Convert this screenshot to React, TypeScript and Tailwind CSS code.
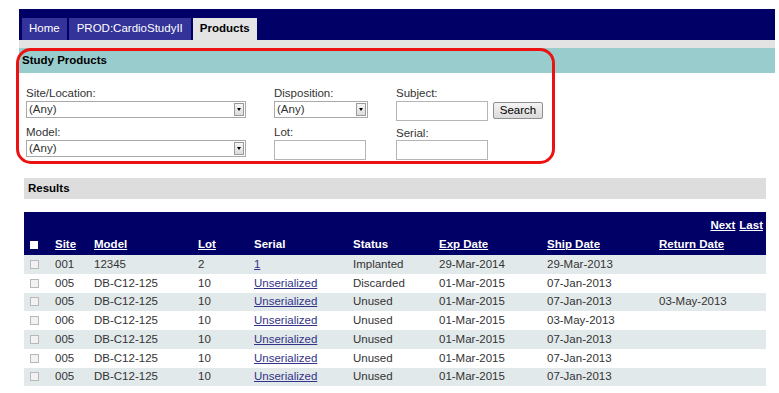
import React from "react";

const rows = [
  { site: "001", model: "12345", lot: "2", serial: "1", status: "Implanted", exp: "29-Mar-2014", ship: "29-Mar-2013", ret: "" },
  { site: "005", model: "DB-C12-125", lot: "10", serial: "Unserialized", status: "Discarded", exp: "01-Mar-2015", ship: "07-Jan-2013", ret: "" },
  { site: "005", model: "DB-C12-125", lot: "10", serial: "Unserialized", status: "Unused", exp: "01-Mar-2015", ship: "07-Jan-2013", ret: "03-May-2013" },
  { site: "006", model: "DB-C12-125", lot: "10", serial: "Unserialized", status: "Unused", exp: "01-Mar-2015", ship: "03-May-2013", ret: "" },
  { site: "005", model: "DB-C12-125", lot: "10", serial: "Unserialized", status: "Unused", exp: "01-Mar-2015", ship: "07-Jan-2013", ret: "" },
  { site: "005", model: "DB-C12-125", lot: "10", serial: "Unserialized", status: "Unused", exp: "01-Mar-2015", ship: "07-Jan-2013", ret: "" },
  { site: "005", model: "DB-C12-125", lot: "10", serial: "Unserialized", status: "Unused", exp: "01-Mar-2015", ship: "07-Jan-2013", ret: "" },
];

const cols = "grid grid-cols-[31px_39px_104px_56px_99px_86px_108px_112px_1fr] items-center";

function Select({ w }: { w: string }) {
  return (
    <div className={`${w} h-[17px] border border-[#a9a9a9] bg-white flex items-center justify-between pl-[2px] pr-[1px]`}>
      <span className="leading-none">(Any)</span>
      <div className="w-[10px] h-[13px] border border-[#9a9a9a] bg-gradient-to-b from-[#f6f6f6] to-[#dcdcdc] flex items-center justify-center">
        <div className="w-0 h-0 border-l-[2.5px] border-r-[2.5px] border-t-[3px] border-l-transparent border-r-transparent border-t-black" />
      </div>
    </div>
  );
}

function TextBox() {
  return <div className="w-[92px] h-[20px] border border-[#b5b5b5] bg-white" />;
}

export default function App() {
  return (
    <div className="relative w-[779px] h-[393px] bg-white text-[11.5px] text-[#333] font-['Liberation_Sans',Arial,sans-serif] overflow-hidden">
      {/* header */}
      <div className="pt-[9px] pl-[19px] pr-[4px]">
        <div className="h-[31px] bg-[#000066] flex items-end gap-[2px] pl-[3px]">
          <div className="h-[22px] px-[7px] bg-[#333399] text-white flex items-center">Home</div>
          <div className="h-[22px] px-[8px] bg-[#333399] text-white flex items-center">PROD:CardioStudyII</div>
          <div className="h-[22px] px-[7px] bg-[#e4e4e4] text-black font-bold flex items-center">Products</div>
        </div>
        <div className="h-[8px] bg-[#e3e3e3]" />
        <div className="h-[25px] bg-[#99cccc] flex items-center pl-[3px] font-bold text-black">Study Products</div>
      </div>

      {/* filter form */}
      <div className="flex pl-[26px] pt-[13px]">
        <div className="w-[220px] flex flex-col">
          <div className="h-[14px] leading-[14px]">Site/Location:</div>
          <div className="mt-[1px]"><Select w="w-[220px]" /></div>
          <div className="h-[14px] leading-[14px] mt-[7px]">Model:</div>
          <div className="mt-[1px]"><Select w="w-[220px]" /></div>
        </div>
        <div className="ml-[28px] w-[94px] flex flex-col">
          <div className="h-[14px] leading-[14px]">Disposition:</div>
          <div className="mt-[1px]"><Select w="w-[94px]" /></div>
          <div className="h-[14px] leading-[14px] mt-[7px]">Lot:</div>
          <div className="mt-[1px]"><TextBox /></div>
        </div>
        <div className="ml-[28px] w-[92px] flex flex-col">
          <div className="h-[14px] leading-[14px]">Subject:</div>
          <div className="mt-[1px]"><TextBox /></div>
          <div className="h-[14px] leading-[14px] mt-[5px]">Serial:</div>
          <div className="mt-[0px]"><TextBox /></div>
        </div>
        <div className="ml-[5px] mt-[16px]">
          <div className="h-[17px] w-[50px] border border-[#8f8f8f] rounded-[2px] bg-gradient-to-b from-[#f4f4f4] to-[#dadada] text-black flex items-center justify-center">Search</div>
        </div>
      </div>

      {/* results */}
      <div className="mx-[24px] mt-[18px] w-[742px]">
        <div className="h-[21px] bg-[#dddddd] flex items-center pl-[4px] font-bold text-black">Results</div>
        <div className="mt-[13px] bg-[#000066] h-[43px] flex flex-col">
          <div className="h-[22px] flex items-end justify-end pr-[3px] gap-[4px] text-white font-bold">
            <span className="underline">Next</span>
            <span className="underline">Last</span>
          </div>
          <div className={`${cols} h-[21px] text-white font-bold`}>
            <div className="pl-[6px]"><div className="w-[8px] h-[8px] bg-white" /></div>
            <span className="underline">Site</span>
            <span className="underline">Model</span>
            <span className="underline">Lot</span>
            <span>Serial</span>
            <span>Status</span>
            <span className="underline">Exp Date</span>
            <span className="underline">Ship Date</span>
            <span className="underline">Return Date</span>
          </div>
        </div>
        {rows.map((r, i) => (
          <div key={i} className={`${cols} h-[18.75px] ${i % 2 === 0 ? "bg-[#e2e9ea]" : "bg-white"}`}>
            <div className="pl-[6px]"><div className="w-[9px] h-[9px] border border-[#b8b8b8] bg-[#f2f2f2]" /></div>
            <span>{r.site}</span>
            <span>{r.model}</span>
            <span>{r.lot}</span>
            <span className="underline text-[#333388]">{r.serial}</span>
            <span>{r.status}</span>
            <span>{r.exp}</span>
            <span>{r.ship}</span>
            <span>{r.ret}</span>
          </div>
        ))}
      </div>

      {/* red annotation outline */}
      <div className="absolute left-[16px] top-[48px] w-[539px] h-[116px] border-[3px] border-[#ee1111] rounded-[15px] pointer-events-none" />
    </div>
  );
}
